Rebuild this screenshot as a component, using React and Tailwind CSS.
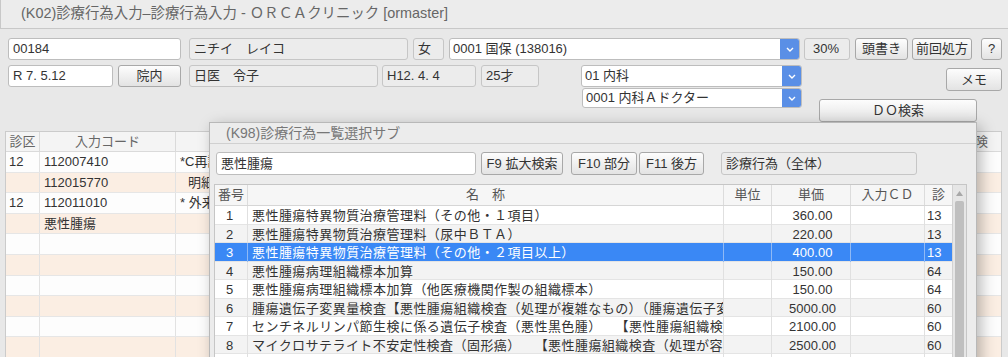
import React from 'react';

const Field = ({ className = '', white = false, children }) => (
  <div
    className={`flex items-center pl-[4px] rounded-[3px] border whitespace-nowrap overflow-hidden text-[#333] ${
      white ? 'bg-white border-[#bdbdbd]' : 'bg-[#ececec] border-[#c6c6c6]'
    } ${className}`}
  >
    {children}
  </div>
);

const Btn = ({ className = '', children }) => (
  <div
    className={`flex items-center justify-center rounded-[3px] border border-[#a8a8a8] bg-linear-to-b from-[#fdfdfd] to-[#e3e3e3] text-[#333] whitespace-nowrap ${className}`}
  >
    {children}
  </div>
);

const Combo = ({ className = '', children }) => (
  <div className={`flex rounded-[3px] border border-[#bdbdbd] bg-white overflow-hidden ${className}`}>
    <div className="flex-1 flex items-center pl-[3px] whitespace-nowrap text-[#333]">{children}</div>
    <div className="w-[19px] bg-[#5a8fe6] flex items-center justify-center">
      <svg width="8" height="5" viewBox="0 0 8 5">
        <path d="M1 1l3 3 3-3" stroke="white" strokeWidth="1.4" fill="none" />
      </svg>
    </div>
  </div>
);

const leftRows = [
  ['12', '112007410', '*C再診料', false],
  ['', '112015770', '明細書発行体制等加算', true],
  ['12', '112011010', '* 外来管理加算', false],
  ['', '悪性腫瘍', '', false],
  ['', '', '', false],
  ['', '', '', false],
  ['', '', '', false],
  ['', '', '', false],
  ['', '', '', false],
  ['', '', '', false],
];

const items = [
  ['1', '悪性腫瘍特異物質治療管理料（その他・１項目）', '360.00', '13'],
  ['2', '悪性腫瘍特異物質治療管理料（尿中ＢＴＡ）', '220.00', '13'],
  ['3', '悪性腫瘍特異物質治療管理料（その他・２項目以上）', '400.00', '13'],
  ['4', '悪性腫瘍病理組織標本加算', '150.00', '64'],
  ['5', '悪性腫瘍病理組織標本加算（他医療機関作製の組織標本）', '150.00', '64'],
  ['6', '腫瘍遺伝子変異量検査【悪性腫瘍組織検査（処理が複雑なもの）（腫瘍遺伝子変異量検査）】', '5000.00', '60'],
  ['7', 'センチネルリンパ節生検に係る遺伝子検査（悪性黒色腫）　　【悪性腫瘍組織検査】', '2100.00', '60'],
  ['8', 'マイクロサテライト不安定性検査（固形癌）　　【悪性腫瘍組織検査（処理が容易なもの）】', '2500.00', '60'],
  ['9', 'ＢＲＡＦ遺伝子検査（悪性黒色腫）　　【悪性腫瘍組織検査（処理が容易なもの）】', '2500.00', '60'],
];

export default function App() {
  return (
    <div className="relative w-[1008px] h-[357px] overflow-hidden bg-[#e8e8e8] text-[13px] font-['Liberation_Sans','Noto_Sans_CJK_JP',sans-serif]">
      {/* window title */}
      <div className="h-[29px] flex items-center pl-[20px] bg-[#ececec] border-b border-l border-[#c8c8c8] text-[14.4px] text-[#666]">
        (K02)診療行為入力–診療行為入力 - ＯＲＣＡクリニック [ormaster]
      </div>

      {/* patient header */}
      <div className="pl-[8px] pr-[6px] pt-[9px]">
        <div className="flex h-[22px]">
          <Field white className="w-[173px]">00184</Field>
          <Field className="ml-[8px] w-[219px]">ニチイ　レイコ</Field>
          <Field className="ml-[5px] w-[31px]">女</Field>
          <Combo className="ml-[5px] w-[351px]">0001 国保 (138016)</Combo>
          <Field className="ml-[4px] w-[46px] pl-[8px]">30%</Field>
          <Btn className="ml-[5px] w-[53px]">頭書き</Btn>
          <Btn className="ml-[4px] w-[60px]">前回処方</Btn>
          <Btn className="ml-[9px] w-[21px]">?</Btn>
        </div>

        <div className="flex items-start mt-[5px]">
          <div className="flex h-[22px]">
            <Field white className="w-[105px]">R 7. 5.12</Field>
            <Btn className="ml-[5px] w-[63px]">院内</Btn>
            <Field className="ml-[8px] w-[189px]">日医　令子</Field>
            <Field className="ml-[4px] w-[94px]">H12. 4. 4</Field>
            <Field className="ml-[5px] w-[58px]">25才</Field>
          </div>
          <div className="ml-[42px] w-[221px] flex flex-col">
            <Combo className="h-[22px]">01 内科</Combo>
            <Combo className="h-[20px] mt-[1px] ml-[1px]">0001 内科Ａドクター</Combo>
          </div>
          <div className="flex-1 flex flex-col items-end">
            <Btn className="mt-[3px] w-[56px] h-[23px]">メモ</Btn>
            <Btn className="mt-[8px] mr-[25px] w-[158px] h-[23px]">ＤＯ検索</Btn>
          </div>
        </div>
      </div>

      {/* order table behind dialog */}
      <div className="mt-[9px] ml-[5px] mr-[6px] border-t border-l border-r border-[#cbcbcb] bg-white">
        <div className="flex h-[20px] bg-[#f4f4f4] border-b border-[#dadada] text-[#666]">
          <div className="w-[34px] flex items-center justify-center border-r border-[#dadada]">診区</div>
          <div className="w-[136px] flex items-center justify-center border-r border-[#dadada]">入力コード</div>
          <div className="flex-1 flex items-center justify-center border-r border-[#dadada]">名称</div>
          <div className="w-[52px] flex items-center justify-center">保険</div>
        </div>
        {leftRows.map((r, i) => (
          <div
            key={i}
            className={`flex h-[20.6px] border-b border-[#e6e6e6] text-[#333] ${i % 2 ? 'bg-[#fbeee3]' : 'bg-[#fdfdfd]'}`}
          >
            <div className="w-[34px] flex items-center pl-[3px] border-r border-[#e2e2e2]">{r[0]}</div>
            <div className="w-[136px] flex items-center pl-[4px] border-r border-[#e2e2e2]">{r[1]}</div>
            <div className={`flex-1 flex items-center border-r border-[#e2e2e2] whitespace-nowrap ${r[3] ? 'pl-[12px]' : 'pl-[4px]'}`}>
              {r[2]}
            </div>
            <div className="w-[52px] flex items-center justify-center">{i === 0 ? '.' : ''}</div>
          </div>
        ))}
      </div>

      {/* K98 selection dialog */}
      <div className="absolute left-[209px] top-[122px] w-[768px] h-[260px] bg-[#ececec] border border-[#b8b8b8] shadow-[4px_4px_14px_rgba(0,0,0,0.28)]">
        <div className="h-[21px] flex items-center pl-[16px] border-b border-[#d0d0d0] text-[14px] text-[#777]">
          (K98)診療行為一覧選択サブ
        </div>
        <div className="flex h-[23px] mt-[8px] ml-[6px]">
          <Field white className="w-[260px]">悪性腫瘍</Field>
          <Btn className="ml-[5px] w-[82px]">F9 拡大検索</Btn>
          <Btn className="ml-[8px] w-[66px]">F10 部分</Btn>
          <Btn className="ml-[2px] w-[65px]">F11 後方</Btn>
          <Field className="ml-[17px] w-[196px]">診療行為（全体）</Field>
        </div>

        <div className="mt-[9px] ml-[4px] w-[753px] flex border border-[#c6c6c6] bg-white">
          <div className="w-[737px]">
            <div className="grid grid-cols-[33px_476px_48px_79px_74px_27px] h-[21px] bg-[#f6f6f6] border-b border-[#d6d6d6] text-[#555]">
              <div className="flex items-center justify-center border-r border-[#dcdcdc]">番号</div>
              <div className="flex items-center justify-center border-r border-[#dcdcdc]">名　称</div>
              <div className="flex items-center justify-center border-r border-[#dcdcdc]">単位</div>
              <div className="flex items-center justify-center border-r border-[#dcdcdc]">単価</div>
              <div className="flex items-center justify-center border-r border-[#dcdcdc]">入力ＣＤ</div>
              <div className="flex items-center justify-center">診</div>
            </div>
            {items.map((it, i) => {
              const sel = i === 2;
              const bg = sel ? 'bg-[#3a88f5] text-white' : i % 2 ? 'bg-[#f3f3f3] text-[#333]' : 'bg-white text-[#333]';
              const line = sel ? 'border-[#8fb9f5]' : 'border-[#e0e0e0]';
              return (
                <div
                  key={it[0]}
                  className={`grid grid-cols-[33px_476px_48px_79px_74px_27px] h-[18.5px] border-b border-[#e4e4e4] ${bg}`}
                >
                  <div className={`flex items-center pl-[11px] border-r ${line}`}>{it[0]}</div>
                  <div className={`flex items-center pl-[4px] border-r overflow-hidden whitespace-nowrap tracking-[0.45px] ${line}`}>
                    {it[1]}
                  </div>
                  <div className={`border-r ${line}`} />
                  <div className={`flex items-center justify-center pl-[3px] border-r ${line}`}>{it[2]}</div>
                  <div className={`border-r ${line}`} />
                  <div className="flex items-center pl-[2px]">{it[3]}</div>
                </div>
              );
            })}
          </div>
          {/* scrollbar */}
          <div className="w-[14px] flex flex-col bg-[#e6e6e6] border-l border-[#d2d2d2]">
            <div className="h-[16px] flex items-center justify-center">
              <svg width="7" height="5" viewBox="0 0 7 5">
                <path d="M0 5L3.5 0L7 5Z" fill="#a8a8a8" />
              </svg>
            </div>
            <div className="flex-1 mx-[2px] rounded-t-[2px] bg-[#bfbfbf]" />
          </div>
        </div>
      </div>
    </div>
  );
}
